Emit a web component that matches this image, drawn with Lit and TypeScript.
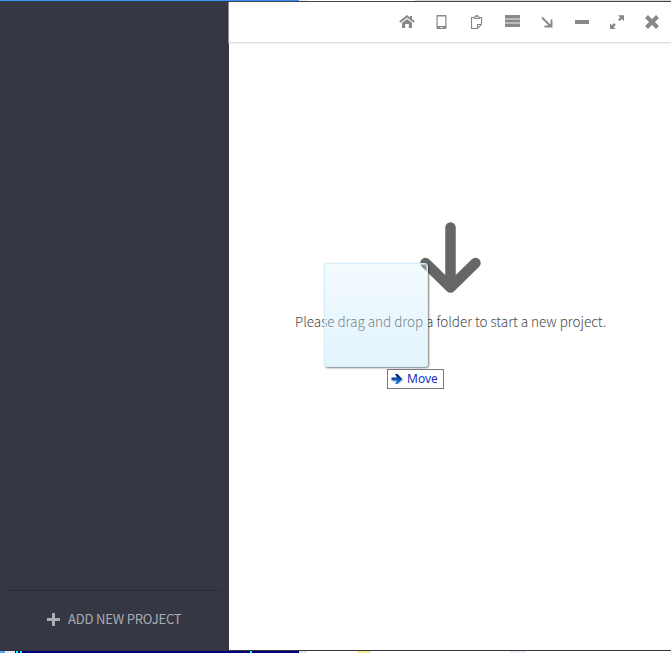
import { LitElement, html, css, svg } from "lit";
import { customElement } from "lit/decorators.js";

const tools = [
  { name: "Home", art: svg`<path d="M0.8 8 8 2.200 15.2 8" fill="none" stroke="#888" stroke-width="2"/><path d="M11 2h2v4h-2zM3 8.8 8 4.900l5 3.900V14H9.8V10H6.2v4H3z"/>` },
  { name: "Device", art: svg`<path fill-rule="evenodd" d="M3.500 1h8a1 1 0 0 1 1 1v12a1 1 0 0 1-1 1h-8a1 1 0 0 1-1-1V2a1 1 0 0 1 1-1zM3.700 2.500v9.500h7.600V2.500zM6.500 13v1h2v-1z"/>` },
  { name: "Paste", art: svg`<path d="M5 3.500H2.500v11H8.500L12.500 10.500V3.500H10M8.500 14.500v-4h4" fill="none" stroke="#888" stroke-width="1.100"/><path d="M4.500 2.500h2V1h2.500v1.500h2V5h-6.500z"/><path d="M5.500 3.500h4.400" stroke="#fff" stroke-width="0.700"/>` },
  { name: "List", art: svg`<path fill="#bbb" d="M1 2h15v11H1z"/><path d="M1 1h15v3H1zM1 6h15v2H1zM1 10h15v3H1z"/>` },
  { name: "Dock", art: svg`<path d="M3 3.500 11.500 12M12.500 5.500V12.500H5.500" fill="none" stroke="#888" stroke-width="1.900"/>` },
  { name: "Minimize", art: svg`<path d="M1 6h14v4H1z"/>` },
  { name: "Expand", art: svg`<path d="M9 1.200h6v6L12.900 5.100 10.700 7.300 9 5.600 11.200 3.400zM1 15V9.500l1.800 1.800L5 9.100 6.800 10.900 4.600 13.100 6.500 15z"/>` },
  { name: "Close", art: svg`<path d="M2.500 2.500 13.500 13.500M13.500 2.500 2.500 13.500" stroke="#888" stroke-width="4.200"/>` },
];

@customElement("app-root")
export class AppRoot extends LitElement {
  static styles = css`
    :host { display: block; }
    * { box-sizing: border-box; }
    .screen {
      position: relative;
      display: grid;
      grid-template-rows: 1px 649px 1px 2px;
      width: 671px;
      height: 653px;
      overflow: hidden;
      background: #fff;
      font-family: "Noto Sans", "Open Sans", sans-serif;
    }
    .above { background: linear-gradient(90deg, #3b91f7 299px, #eceae4 299px 307px, #fff 307px 415px, #d9d9dd 415px); }
    .window {
      display: grid;
      grid-template-columns: 229px 1fr;
      border-top: 1px solid #43434d;
      background: #fff;
    }
    .side {
      display: flex;
      flex-direction: column;
      justify-content: flex-end;
      margin-top: -1px;
      padding: 0 8px;
      background: #353843;
    }
    .add {
      display: flex;
      align-items: center;
      height: 60px;
      padding: 0 0 3px 39px;
      border-top: 1px solid #292c36;
      color: #a9adb4;
      white-space: nowrap;
    }
    .plus { width: 13px; height: 13px; margin-right: 8px; fill: #a9adb4; }
    .caption {
      font-family: "Noto Sans CJK SC", "Noto Sans", sans-serif;
      font-size: 13px;
      letter-spacing: -0.180px;
      line-height: 20px;
    }
    .main { display: flex; flex-direction: column; }
    .bar {
      display: flex;
      align-items: center;
      justify-content: flex-end;
      gap: 19px;
      height: 41px;
      padding: 0 11px 1px 0;
      border-bottom: 1px solid #dfdfdf;
      box-shadow: 0 1px 1px #f2f2f2, -1px 0 0 #777b83;
    }
    .tool { width: 16px; height: 16px; fill: #888; }
    .drop {
      display: flex;
      flex-direction: column;
      align-items: center;
      padding: 179px 0 0 1px;
    }
    .arrow { width: 62px; height: 72px; }
    .hint {
      margin-top: 17px;
      color: #484848;
      font-family: "Noto Sans CJK SC", "Noto Sans", sans-serif;
      font-size: 13.500px;
      font-weight: 300;
      letter-spacing: -0.020px;
      line-height: 20px;
      white-space: nowrap;
    }
    .edge { background: #343540; }
    .below {
      background: linear-gradient(90deg, #55aaff 5px, #eeeaf0 5px 15px, #00007f 15px 16px, #00ffff 16px 18px, #00007f 18px 20px, #00ffff 20px 22px, #00007f 22px 250px, #00ffff 250px 252px, #00007f 252px 299px, #e7e6ef 299px 307px, #fff 307px 358px, #eeec91 358px 370px, #fff 370px 510px, #efeef5 510px 526px, #fff 526px);
    }
    .ghost {
      position: absolute;
      left: 324px;
      top: 263px;
      width: 104px;
      height: 104px;
      border: 1px solid #d3eefa;
      border-radius: 3px;
      background: linear-gradient(rgba(215, 241, 253, 0.3), rgba(183, 226, 249, 0.4));
      box-shadow: 1px 1px 2px 0 rgba(0, 0, 0, 0.5), inset 0 0 0 1px rgba(239, 250, 255, 0.5);
    }
    .tip {
      position: absolute;
      left: 387px;
      top: 369px;
      display: flex;
      align-items: center;
      width: 57px;
      height: 20px;
      padding: 0 0 1px 3px;
      border: 1px solid #767676;
      background: #fff;
      color: #1a2fc0;
      font-size: 12px;
    }
    .move { width: 13px; height: 12px; margin-right: 3px; }
  `;

  render() {
    return html`
      <div class="screen">
        <div class="above"></div>
        <div class="window">
          <aside class="side">
            <div class="add">
              <svg class="plus" viewBox="0 0 13 13"><path d="M5 0h3v5h5v3H8v5H5V8H0V5h5z" /></svg>
              <span class="caption">ADD NEW PROJECT</span>
            </div>
          </aside>
          <main class="main">
            <header class="bar">
              ${tools.map((t) => html`<svg class="tool" viewBox="0 0 16 16" aria-label=${t.name}>${t.art}</svg>`)}
            </header>
            <section class="drop">
              <svg class="arrow" viewBox="0 0 62 72">
                <path d="M30.500 5.500V65M5.500 41 30.500 65.500 55.500 41" fill="none" stroke="#666" stroke-width="10.500" stroke-linecap="round" stroke-linejoin="round" />
              </svg>
              <div class="hint">Please drag and drop a folder to start a new project.</div>
            </section>
          </main>
        </div>
        <div class="edge"></div>
        <div class="below"></div>
        <div class="ghost"></div>
        <div class="tip">
          <svg class="move" viewBox="0 0 13 12">
            <defs><linearGradient id="g" x2="0" y2="1"><stop offset="0" stop-color="#001560" /><stop offset="1" stop-color="#118fff" /></linearGradient></defs>
            <path d="M2 6.500h5V3l5.500 4-5.500 4.500V9H2z" fill="#ccc" />
            <path d="M0.500 4.500H6L4 1h2.500L11.500 6 6.500 11H4L6 7.500H0.500z" fill="url(#g)" />
          </svg>
          <span>Move</span>
        </div>
      </div>
    `;
  }
}
